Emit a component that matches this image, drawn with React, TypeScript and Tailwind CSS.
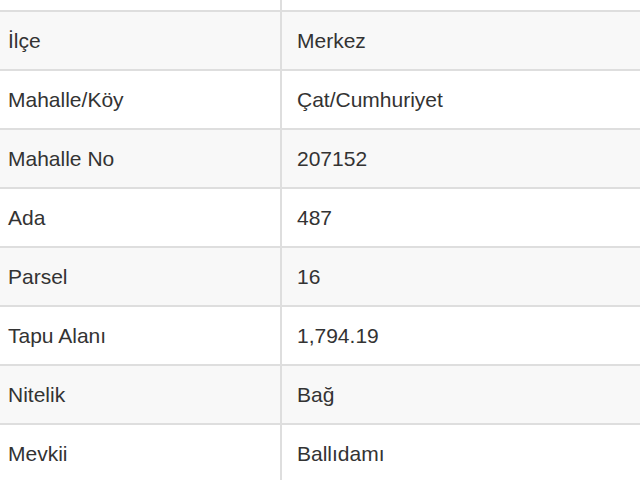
import React from "react";

const rows: [string, string][] = [
  ["İlçe", "Merkez"],
  ["Mahalle/Köy", "Çat/Cumhuriyet"],
  ["Mahalle No", "207152"],
  ["Ada", "487"],
  ["Parsel", "16"],
  ["Tapu Alanı", "1,794.19"],
  ["Nitelik", "Bağ"],
  ["Mevkii", "Ballıdamı"],
];

export default function App() {
  return (
    <div
      className="w-[640px] h-[480px] overflow-hidden bg-white text-[#333333] text-[21px]"
      style={{ fontFamily: '"Liberation Sans", Arial, sans-serif' }}
    >
      <div className="flex h-[10px]">
        <div className="w-[282px] shrink-0 border-r-2 border-[#dedede]" />
        <div className="flex-1" />
      </div>
      {rows.map(([k, v], i) => (
        <div
          key={k}
          className={`flex h-[59px] border-t-2 border-[#dedede] ${i % 2 === 0 ? "bg-[#f8f8f8]" : "bg-white"}`}
        >
          <div className="w-[282px] shrink-0 border-r-2 border-[#dedede] flex items-center pl-[8px]">
            {k}
          </div>
          <div className="flex-1 flex items-center pl-[15px]">{v}</div>
        </div>
      ))}
    </div>
  );
}
